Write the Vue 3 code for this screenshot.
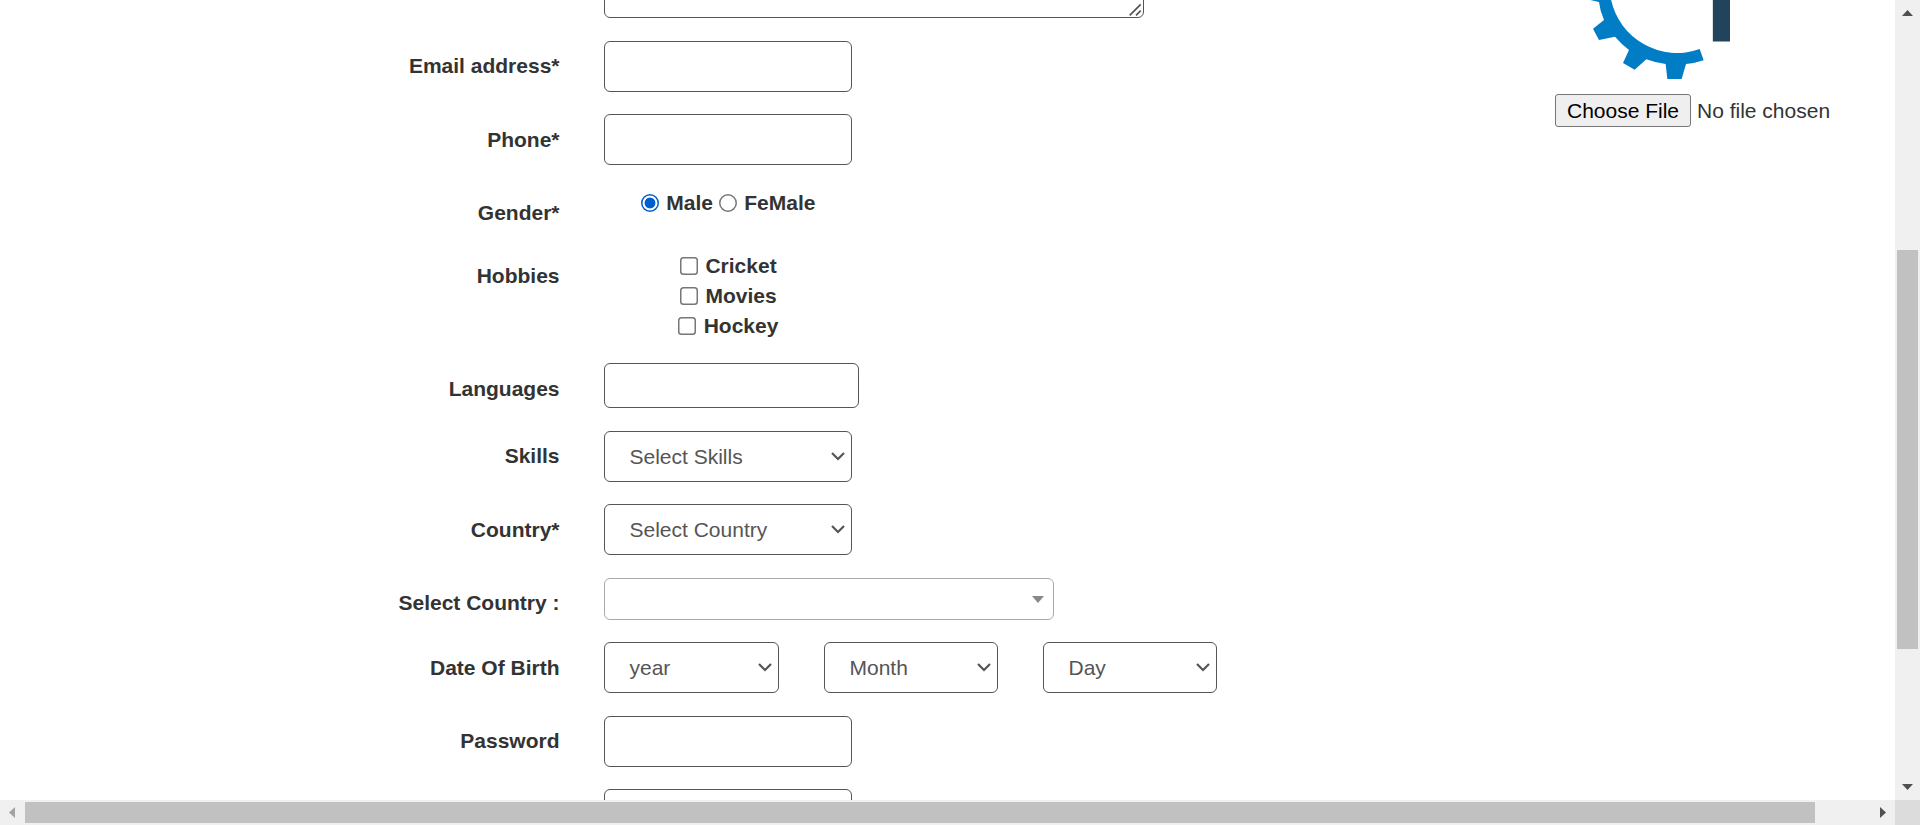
<script setup>
const rows = [
  { id: 'email', label: 'Email address*', type: 'input' },
  { id: 'phone', label: 'Phone*', type: 'input' },
  { id: 'gender', label: 'Gender*', type: 'radio' },
  { id: 'hobbies', label: 'Hobbies', type: 'check' },
  { id: 'languages', label: 'Languages', type: 'input' },
  { id: 'skills', label: 'Skills', type: 'select', options: ['Select Skills'] },
  { id: 'country', label: 'Country*', type: 'select', options: ['Select Country'] },
  { id: 'search', label: 'Select Country :', type: 'combo' },
  { id: 'birth', label: 'Date Of Birth', type: 'select', options: ['year', 'Month', 'Day'] },
  { id: 'password', label: 'Password', type: 'input' },
  { id: 'confirm', label: '', type: 'input' },
]
const hobbies = ['Cricket', 'Movies', 'Hockey']
</script>

<template>
  <div class="window">
    <main class="page">
      <form class="form">
        <div class="row address">
          <span class="label"></span>
          <div class="box textarea">
            <svg class="grip" width="13" height="13" viewBox="0 0 13 13">
              <path d="M.7 12.300 11.700 1.300M7 12.300l4.700-4.700" />
            </svg>
          </div>
        </div>
        <div v-for="row in rows" :key="row.id" class="row" :class="row.id">
          <label class="label">{{ row.label }}</label>
          <div v-if="row.type === 'input'" class="box"></div>
          <div v-else-if="row.type === 'radio'" class="radios">
            <span class="radio on"></span><span class="male">Male</span>
            <span class="radio"></span><span>FeMale</span>
          </div>
          <div v-else-if="row.type === 'check'" class="checks">
            <div v-for="h in hobbies" :key="h" class="check-line"><span class="check"></span>{{ h }}</div>
          </div>
          <div v-else-if="row.type === 'combo'" class="box combo">
            <svg width="12" height="7" viewBox="0 0 12 7"><path d="M0 0h12L6 7z" fill="#888" /></svg>
          </div>
          <div v-else class="selects">
            <div v-for="o in row.options" :key="o" class="box select">
              <span>{{ o }}</span>
              <svg width="14" height="9" viewBox="0 0 14 9"><path d="m1 1 6 6 6-6" /></svg>
            </div>
          </div>
        </div>
      </form>
      <aside class="photo">
        <svg class="logo" width="200" height="80" viewBox="0 0 600 240">
          <path
            fill="#007dc5"
            d="M104-2 106 0 132 6Q135 33 147 60L114 86 132 120 180 110Q199 132 222 150L204 189 239 209 274 178Q303 189 332 192L337 237H380L393 192Q420 190 446 181L434 147A202 202 0 0 1 168-2Z"
          />
          <path fill="#22435c" d="M473.500-2h51.500v126.500h-51.500z" />
        </svg>
        <div class="file">
          <span class="file-btn">Choose File</span><span>No file chosen</span>
        </div>
      </aside>
    </main>
    <div class="vbar">
      <svg width="11" height="6" viewBox="0 0 11 6"><path d="M5.500 0 11 6H0z" /></svg>
      <div class="vthumb"></div>
      <svg width="11" height="6" viewBox="0 0 11 6"><path d="M0 0h11L5.500 6z" /></svg>
    </div>
    <div class="hbar">
      <svg class="dim" width="6" height="11" viewBox="0 0 6 11"><path d="M6 0v11L0 5.500z" /></svg>
      <div class="hthumb"></div>
      <svg width="6" height="11" viewBox="0 0 6 11"><path d="M0 0v11l6-5.500z" /></svg>
    </div>
    <div class="corner"></div>
  </div>
</template>

<style>
html, body { margin: 0; overflow: hidden; }
</style>

<style scoped>
.window {
  display: grid;
  grid-template: 800px 25px / 1895px 25px;
  width: 1920px;
  height: 825px;
  background: #fff;
  color: #333;
  font: 21px/30px "Liberation Sans", Arial, sans-serif;
}
.window * { box-sizing: border-box; }
.page { display: flex; overflow: hidden; height: 800px; }
.form { width: 1555px; flex: none; margin: 0; }
.row { display: flex; height: 73px; }
.label {
  width: 559.500px;
  margin-right: 44.500px;
  padding-top: 10px;
  text-align: right;
  font-weight: bold;
  flex: none;
  white-space: pre;
}
.box {
  width: 248px;
  height: 51px;
  border: 1px solid #555;
  border-radius: 6px;
  background: #fff;
  flex: none;
}
.address { height: 41px; }
.textarea {
  display: flex;
  align-items: flex-end;
  justify-content: flex-end;
  width: 540px;
  height: 38px;
  margin-top: -20px;
  padding: 0 1px 1px 0;
}
.grip path { fill: none; stroke: #555; stroke-width: 1.7; }
.phone { height: 74px; }
.phone .label, .country .label, .languages .label, .birth .label { padding-top: 11px; }
.gender { height: 63px; }
.hobbies { height: 112px; }
.languages { height: 68px; }
.languages .box { width: 255px; height: 45px; }
.country { height: 74px; }
.search { height: 64px; }
.birth { height: 74px; }
.radios { display: flex; padding-left: 37px; font-weight: bold; }
.radio, .check {
  width: 18px;
  height: 18px;
  margin: 6px 7.300px 0 0;
  box-shadow: inset 0 0 0 1.500px #767676;
}
.radio { border-radius: 50%; }
.radio.on {
  background: radial-gradient(circle, #005fd0 5px, #fff 5.800px);
  box-shadow: inset 0 0 0 1.500px #005fd0;
}
.male { margin-right: 6px; }
.checks { width: 248px; font-weight: bold; }
.check-line { display: flex; justify-content: center; height: 30px; padding-left: .8px; }
.check { border-radius: 3.500px; }
.combo {
  display: flex;
  align-items: center;
  justify-content: flex-end;
  width: 450px;
  height: 42px;
  padding-right: 9px;
  border-color: #aaa;
}
.selects { display: flex; gap: 45px; }
.select {
  display: flex;
  align-items: center;
  justify-content: space-between;
  padding: 0 6px 0 24.500px;
  color: #555;
}
.select path { fill: none; stroke: #555; stroke-width: 2.200; }
.birth .select { width: 174px; }
.birth .select:first-child { width: 175px; }
.logo { display: block; }
.photo { width: 340px; }
.file { display: flex; align-items: center; gap: 6px; height: 33px; margin-top: 14px; white-space: nowrap; }
.file-btn {
  width: 136px;
  height: 33px;
  border: 1px solid #767676;
  border-radius: 3px;
  background: #efefef;
  color: #000;
  text-align: center;
  line-height: 31px;
}
.vbar { display: flex; flex-direction: column; align-items: center; padding: 10px 0; background: #f0f0f0; }
.vthumb { width: 21px; height: 399px; margin: 234px 0 135px; background: #c1c1c1; }
.hbar { display: flex; align-items: center; padding: 0 9px; background: #f0f0f0; }
.hthumb { width: 1790px; height: 21px; margin: 0 65px 0 10px; background: #c1c1c1; flex: none; }
.vbar svg, .hbar svg { flex: none; fill: #505050; }
.hbar .dim { fill: #a3a3a3; }
.corner { background: #dcdcdc; }
</style>
